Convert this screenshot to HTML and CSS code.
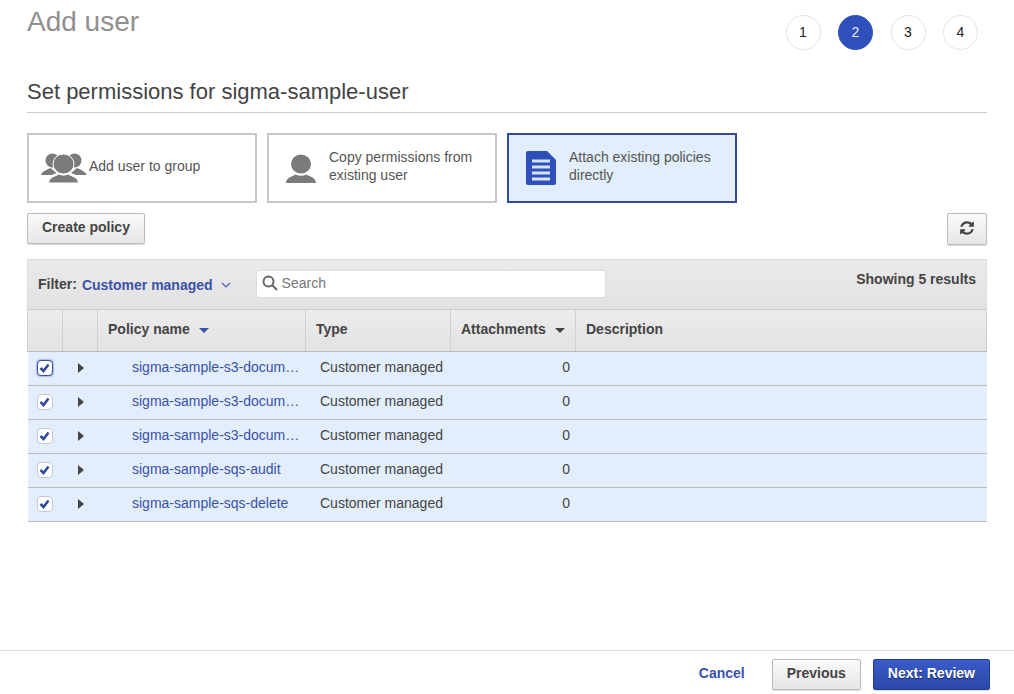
FILE: index.html
```html
<!doctype html>
<html>

<head>
    <meta charset="utf-8">
    <title>Add user</title>
    <link rel="stylesheet" href="styles.css">
</head>

<body>
    <div class="page">
        <div class="content">
            <div class="top">
                <h1>Add user</h1>
                <ol class="steps">
                    <li>1</li>
                    <li class="on">2</li>
                    <li>3</li>
                    <li>4</li>
                </ol>
            </div>

            <h2>Set permissions for sigma-sample-user</h2>

            <div class="cards">
                <div class="card">
                    <svg class="group-icon" width="46" height="30" viewBox="0 0 46 30">
                        <circle class="grey" cx="11.500" cy="7.500" r="7"/>
                        <circle class="grey" cx="33.500" cy="7.500" r="7"/>
                        <path class="grey" d="M0 22c1-3.500 5-5 9.500-7l6 5-5 2zM45.500 22c-1-3.500-5-5-9.500-7l-6 5 5 2z"/>
                        <ellipse class="grey ring" cx="22.500" cy="11" rx="10.500" ry="10"/>
                        <path class="grey ring" d="M7.500 30c.4-6 6.500-6.500 10.500-9 3 1.500 6 1.500 9 0 4 2.500 10.100 3 10.500 9z"/>
                    </svg>
                    <span>Add user to group</span>
                </div>
                <div class="card pad">
                    <svg class="card-icon" width="30" height="29" viewBox="0 0 30 29">
                        <ellipse class="grey" cx="15" cy="10" rx="10" ry="9.500"/>
                        <path class="grey" d="M0 29c.3-6 7-6.500 9.500-8.500 3.500 1.700 7.500 1.700 11 0C23 22.500 29.700 23 30 29z"/>
                    </svg>
                    <span>Copy permissions from existing user</span>
                </div>
                <div class="card pad active">
                    <svg class="card-icon" width="30" height="34" viewBox="0 0 30 34">
                        <path class="blue" d="M2 0h19l9 9v23a2 2 0 0 1-2 2H2a2 2 0 0 1-2-2V2a2 2 0 0 1 2-2z"/>
                        <path class="lines" d="M6 10h18M6 16h18M6 22h18M6 28h18"/>
                    </svg>
                    <span>Attach existing policies directly</span>
                </div>
            </div>

            <div class="actions">
                <button class="btn">Create policy</button>
                <button class="btn refresh">
                    <svg width="16" height="16" viewBox="0 0 1792 1792">
                        <path d="M1639 1056q0 5-1 7-64 268-268 434.500t-478 166.500q-146 0-282.500-55t-243.500-157l-129 129q-19 19-45 19t-45-19-19-45v-448q0-26 19-45t45-19h448q26 0 45 19t19 45-19 45l-137 137q71 66 161 102t187 36q134 0 250-65t186-179q11-17 53-117 8-23 30-23h192q13 0 22.500 9.500t9.500 22.500zm25-800v448q0 26-19 45t-45 19h-448q-26 0-45-19t-19-45 19-45l138-138q-148-137-349-137-134 0-250 65t-186 179q-11 17-53 117-8 23-30 23h-199q-13 0-22.500-9.500t-9.500-22.500v-7q65-268 270-434.500t480-166.500q146 0 284 55.500t245 156.500l130-129q19-19 45-19t45 19 19 45z"/>
                    </svg>
                </button>
            </div>

            <div class="panel">
                <div class="filter">
                    <b class="filter-label">Filter:</b>
                    <b class="filter-value">Customer managed</b>
                    <svg class="chev" width="10" height="6" viewBox="0 0 10 6">
                        <path d="M1 1l4 4 4-4"/>
                    </svg>
                    <div class="search">
                        <svg width="16" height="16" viewBox="0 0 16 16">
                            <circle cx="6.500" cy="6.500" r="5"/>
                            <path d="M10.300 10.300l4.700 4.700"/>
                        </svg>
                        <span>Search</span>
                    </div>
                    <b class="count">Showing 5 results</b>
                </div>

                <table>
                    <colgroup>
                        <col class="c-check">
                        <col class="c-arrow">
                        <col class="c-name">
                        <col class="c-type">
                        <col class="c-att">
                        <col>
                    </colgroup>
                    <thead>
                        <tr>
                            <th></th>
                            <th></th>
                            <th>Policy name <i class="sort blue-sort"></i></th>
                            <th>Type</th>
                            <th>Attachments <i class="sort"></i></th>
                            <th>Description</th>
                        </tr>
                    </thead>
                    <tbody>
                        <tr>
                            <td class="mid"><span class="check focus"><svg width="11" height="10" viewBox="0 0 11 10"><path d="M1.500 5l3 3 5-6.500"/></svg></span></td>
                            <td class="mid"><i class="arrow"></i></td>
                            <td class="name"><a>sigma-sample-s3-docum…</a></td>
                            <td class="type">Customer managed</td>
                            <td class="num">0</td>
                            <td></td>
                        </tr>
                        <tr>
                            <td class="mid"><span class="check"><svg width="11" height="10" viewBox="0 0 11 10"><path d="M1.500 5l3 3 5-6.500"/></svg></span></td>
                            <td class="mid"><i class="arrow"></i></td>
                            <td class="name"><a>sigma-sample-s3-docum…</a></td>
                            <td class="type">Customer managed</td>
                            <td class="num">0</td>
                            <td></td>
                        </tr>
                        <tr>
                            <td class="mid"><span class="check"><svg width="11" height="10" viewBox="0 0 11 10"><path d="M1.500 5l3 3 5-6.500"/></svg></span></td>
                            <td class="mid"><i class="arrow"></i></td>
                            <td class="name"><a>sigma-sample-s3-docum…</a></td>
                            <td class="type">Customer managed</td>
                            <td class="num">0</td>
                            <td></td>
                        </tr>
                        <tr>
                            <td class="mid"><span class="check"><svg width="11" height="10" viewBox="0 0 11 10"><path d="M1.500 5l3 3 5-6.500"/></svg></span></td>
                            <td class="mid"><i class="arrow"></i></td>
                            <td class="name"><a>sigma-sample-sqs-audit</a></td>
                            <td class="type">Customer managed</td>
                            <td class="num">0</td>
                            <td></td>
                        </tr>
                        <tr>
                            <td class="mid"><span class="check"><svg width="11" height="10" viewBox="0 0 11 10"><path d="M1.500 5l3 3 5-6.500"/></svg></span></td>
                            <td class="mid"><i class="arrow"></i></td>
                            <td class="name"><a>sigma-sample-sqs-delete</a></td>
                            <td class="type">Customer managed</td>
                            <td class="num">0</td>
                            <td></td>
                        </tr>
                    </tbody>
                </table>
            </div>
        </div>

        <div class="footer">
            <a class="cancel">Cancel</a>
            <button class="btn">Previous</button>
            <button class="btn primary">Next: Review</button>
        </div>
    </div>
</body>

</html>
```

FILE: styles.css
```css
* {
    margin: 0;
    padding: 0;
    box-sizing: border-box;
}

ol,
ul,
li {
    list-style: none;
}

body {
    font-family: "Liberation Sans", Arial, sans-serif;
    font-size: 14px;
    color: #444;
    background: #fff;
    overflow: hidden;
}

.page {
    height: 694px;
    display: flex;
    flex-direction: column;
    justify-content: space-between;
    overflow: hidden;
}

.content {
    padding: 0 27px;
}

.top {
    height: 70px;
    display: flex;
    justify-content: space-between;
    align-items: flex-start;
}

h1 {
    font-size: 28px;
    font-weight: normal;
    line-height: 32px;
    margin-top: 6px;
    color: #8f8f8f;
}

.steps {
    display: flex;
    gap: 17.500px;
    margin: 15px 9px 0 0;
}

.steps li {
    width: 35px;
    height: 35px;
    line-height: 33px;
    text-align: center;
    border: 1px solid #e4e4e4;
    border-radius: 50%;
    color: #222;
}

.steps li.on {
    background: #2f4fbb;
    border-color: #2f4fbb;
    color: #e8ecf8;
}

h2 {
    font-size: 22px;
    font-weight: normal;
    line-height: 26px;
    height: 43px;
    padding-top: 9px;
    border-bottom: 1px solid #ccc;
    color: #444;
}

.cards {
    display: flex;
    gap: 10px;
    margin-top: 20px;
}

.card {
    width: 230px;
    height: 70px;
    border: 2px solid #c8c8c8;
    display: flex;
    align-items: center;
    line-height: 18px;
    padding-left: 12px;
    color: #555;
}

.card span {
    margin-bottom: 4px;
}

.group-icon {
    flex: none;
    margin-right: 2px;
}

.card.pad {
    padding-left: 17px;
    padding-right: 20px;
}

.card-icon {
    flex: none;
    margin-right: 13px;
}

.card.active {
    background: #e2eefb;
    border-color: #2f4a9c;
}

.grey {
    fill: #7b7b7b;
}

.ring {
    stroke: #fff;
    stroke-width: 1;
}

.blue {
    fill: #2f4fbb;
}

.lines {
    stroke: #d6e2f6;
    stroke-width: 3;
    fill: none;
}

.actions {
    display: flex;
    justify-content: space-between;
    margin-top: 10px;
}

.btn {
    font-family: inherit;
    font-size: 14px;
    font-weight: bold;
    color: #444;
    height: 31px;
    padding: 0 14px 4px;
    border: 1px solid #bbb;
    border-radius: 2px;
    background: linear-gradient(#fafafa, #e6e6e6);
    box-shadow: 0 1px 1px rgba(0, 0, 0, 0.15);
}

.btn.refresh {
    width: 40px;
    height: 32px;
    padding: 0 0 3px;
    display: flex;
    align-items: center;
    justify-content: center;
}

.btn.refresh path {
    fill: #444;
}

.panel {
    margin-top: 14px;
}

.filter {
    height: 51px;
    display: flex;
    align-items: flex-start;
    border: 1px solid #ddd;
    border-bottom: 1px solid #ccc;
    background: linear-gradient(#eaeaea, #e2e2e2);
    padding: 0 10px;
}

.filter-label {
    margin-top: 15px;
    line-height: 18px;
}

.filter-value {
    margin: 16px 0 0 5px;
    line-height: 18px;
    color: #3b51a8;
}

.chev {
    margin: 22px 0 0 8px;
}

.chev path {
    fill: none;
    stroke: #4a5fa8;
    stroke-width: 1.200;
}

.search {
    width: 350px;
    height: 28px;
    margin: 10px 0 0 25px;
    padding: 0 0 2px 5px;
    background: #fff;
    border: 1px solid #ddd;
    border-radius: 3px;
    display: flex;
    align-items: center;
    color: #777;
}

.search svg {
    margin-right: 4px;
}

.search circle,
.search path {
    fill: none;
    stroke: #666;
    stroke-width: 2;
}

.count {
    margin: 10px 0 0 auto;
    line-height: 18px;
}

table {
    width: 100%;
    table-layout: fixed;
    border-collapse: collapse;
}

.c-check,
.c-arrow {
    width: 35px;
}

.c-name {
    width: 208px;
}

.c-type {
    width: 145px;
}

.c-att {
    width: 125px;
}

th {
    height: 41px;
    padding: 0 10px 2px;
    text-align: left;
    font-size: 14px;
    background: linear-gradient(#ececec, #e2e2e2);
    border: 1px solid #d0d0d0;
    border-top: 0;
    border-bottom: 1px solid #bbb;
}

td {
    height: 34px;
    background: #e2eefb;
    border-bottom: 1px solid #bbb;
    padding-bottom: 3px;
    white-space: nowrap;
}

.mid {
    padding-bottom: 0;
}

.check {
    width: 16px;
    height: 16px;
    margin-left: 9px;
    display: flex;
    align-items: center;
    justify-content: center;
    background: #fff;
    border: 1px solid #c4c8d4;
    border-radius: 4px;
}

.check.focus {
    border-color: #3b51a8;
    box-shadow: 0 0 2px #3b51a8;
}

.check path {
    fill: none;
    stroke: #2f4a9c;
    stroke-width: 2.500;
}

.arrow {
    display: block;
    width: 0;
    height: 0;
    margin-left: 15px;
    border-left: 6px solid #444;
    border-top: 5px solid transparent;
    border-bottom: 5px solid transparent;
}

.name {
    padding-left: 34.500px;
}

.name a {
    color: #3b51a8;
}

.type {
    padding-left: 14.500px;
}

.num {
    text-align: right;
    padding-right: 5.500px;
}

.sort {
    display: inline-block;
    width: 0;
    height: 0;
    margin-left: 5px;
    vertical-align: 1px;
    border-top: 5px solid #444;
    border-left: 5px solid transparent;
    border-right: 5px solid transparent;
}

.blue-sort {
    border-top-color: #3b51a8;
}

.footer {
    height: 44px;
    border-top: 1px solid #ddd;
    display: flex;
    align-items: flex-start;
    justify-content: flex-end;
    padding: 8px 24px 0 0;
    gap: 12px;
}

.cancel {
    font-weight: bold;
    color: #3b51a8;
    margin-right: 15px;
    line-height: 28px;
}

.btn.primary {
    background: linear-gradient(#3a5cc8, #2a48a8);
    border-color: #23408f;
    color: #fff;
    text-shadow: 0 1px 1px rgba(0, 0, 0, 0.5);
}
```
